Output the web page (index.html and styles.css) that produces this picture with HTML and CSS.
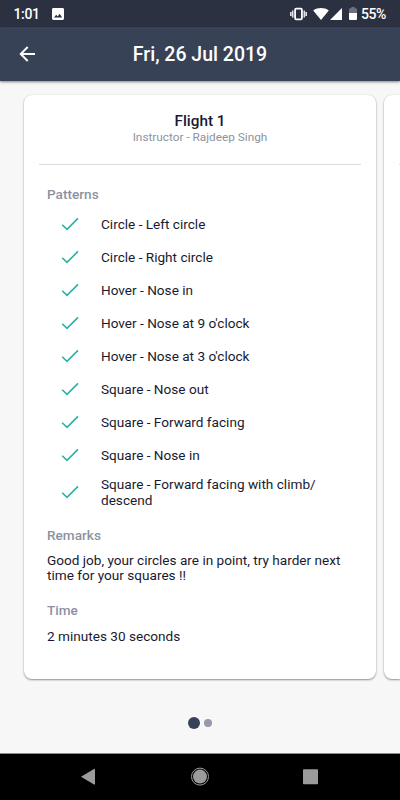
FILE: index.html
```html
<!DOCTYPE html>
<html lang="en">
<head>
<meta charset="utf-8">
<title>Fri, 26 Jul 2019</title>
<link rel="stylesheet" href="styles.css">
</head>
<body>
<svg class="defs" aria-hidden="true"><symbol id="check" viewBox="0 0 18 14"><path d="M1.2 7.7 6 12.4 17 1.4" fill="none" stroke="currentColor" stroke-width="1.6"/></symbol></svg>
<div class="status">
  <span class="clock">1:01</span>
  <svg class="photo" viewBox="0 0 12 12"><rect width="12" height="12" rx="1.4" fill="#fff"/><path d="M2 9.5 4.2 6.8 5.7 8.4 7.6 5.8 10.2 9.5z" fill="#2b3140"/></svg>
  <svg class="vibrate" viewBox="0 0 17 14"><path d="M.8 5v4M2.7 3.5v7M14.3 3.5v7M16.2 5v4" stroke="#e0e1e4" stroke-width="1.6"/><rect x="5.1" y="1.7" width="6.8" height="10.6" rx="1" fill="none" stroke="#fff" stroke-width="1.8"/></svg>
  <svg class="wifi" viewBox="0 0 16 12"><path d="M8 12 .2 2.4C4.8-.8 11.2-.8 15.8 2.4z" fill="#fff"/></svg>
  <svg class="signal" viewBox="0 0 12 12"><path d="M12 0v12H0z" fill="#fff"/></svg>
  <svg class="battery" viewBox="0 0 8 13"><path d="M2.3 0h3.4v1.2H7q1 0 1 1V6H0V2.2q0-1 1-1h1.3z" fill="#6d717c"/><path d="M0 6h8v6q0 1-1 1H1q-1 0-1-1z" fill="#fff"/></svg>
  <span class="percent">55%</span>
</div>
<header class="appbar">
  <svg class="back" viewBox="0 0 16 16"><path d="M16 8H1.8M8.7 1 1.7 8l7 7" fill="none" stroke="#fff" stroke-width="1.9"/></svg>
  <h1>Fri, 26 Jul 2019</h1>
</header>
<main>
  <div class="pager">
    <article class="card">
      <div class="head">
        <h2>Flight 1</h2>
        <p class="sub">Instructor - Rajdeep Singh</p>
      </div>
      <div class="body">
        <h3>Patterns</h3>
        <ul>
          <li><svg><use href="#check"/></svg><span>Circle - Left circle</span></li>
          <li><svg><use href="#check"/></svg><span>Circle - Right circle</span></li>
          <li><svg><use href="#check"/></svg><span>Hover - Nose in</span></li>
          <li><svg><use href="#check"/></svg><span>Hover - Nose at 9 o'clock</span></li>
          <li><svg><use href="#check"/></svg><span>Hover - Nose at 3 o'clock</span></li>
          <li><svg><use href="#check"/></svg><span>Square - Nose out</span></li>
          <li><svg><use href="#check"/></svg><span>Square - Forward facing</span></li>
          <li><svg><use href="#check"/></svg><span>Square - Nose in</span></li>
          <li class="tall"><svg><use href="#check"/></svg><span>Square - Forward facing with climb/<br>descend</span></li>
        </ul>
        <h3 class="remarks">Remarks</h3>
        <p class="text">Good job, your circles are in point, try harder next<br>time for your squares !!</p>
        <h3 class="time">Time</h3>
        <p class="text duration">2 minutes 30 seconds</p>
      </div>
    </article>
    <article class="card next"><div class="head"></div></article>
  </div>
  <div class="dots"><i class="active"></i><i></i></div>
</main>
<nav>
  <svg viewBox="0 0 400 46"><path d="M81 22.7 94 15q1-.5 1 .5v14.4q0 1-1 .5z" fill="#9b9b9b"/><circle cx="200" cy="22.6" r="8.5" fill="none" stroke="#9b9b9b" stroke-width="1"/><circle cx="200" cy="22.6" r="7" fill="#9b9b9b"/><rect x="303" y="15.2" width="15" height="15" rx=".8" fill="#9b9b9b"/></svg>
</nav>
</body>
</html>
```
FILE: styles.css
```css
* { box-sizing: border-box; margin: 0; padding: 0; }
body {
  width: 400px; height: 800px; overflow: hidden;
  display: flex; flex-direction: column;
  font-family: Roboto, sans-serif; background: #f7f7f7; color: #191a30;
}
svg { display: block; flex: none; }
.defs { position: absolute; width: 0; height: 0; }
.status {
  height: 27px; flex: none; display: flex; align-items: center;
  padding: 0 14px 0 13.5px; background: #2b3140; color: #fff;
}
.clock, .percent { font-size: 14px; font-weight: 500; line-height: 16px; padding-top: 1px; }
.clock { width: 38.5px; letter-spacing: -0.35px; }
.photo { width: 12px; height: 12px; }
.vibrate { width: 17px; height: 14px; margin-left: auto; }
.wifi { width: 16px; height: 12px; margin-left: 6px; }
.signal { width: 12px; height: 12px; margin-left: 1px; }
.battery { width: 8px; height: 13px; margin: 0 4px 0 7px; }
.percent { width: 25px; letter-spacing: -0.5px; white-space: nowrap; }
.appbar {
  height: 54px; flex: none; display: flex; align-items: center; position: relative; z-index: 1;
  padding-left: 19px; background: #384256; color: #fff;
  box-shadow: 0 1px 2px rgba(0,0,0,.4), 0 2px 4px rgba(0,0,0,.08);
}
.back { width: 16px; height: 16px; }
h1 { flex: 1; padding: 2px 35px 0 0; text-align: center; font-size: 19.5px; line-height: 24px; font-weight: 500; }
main { height: 673px; flex: none; padding-top: 14px; overflow: hidden; border-bottom: 1px solid #8c8c8c; }
.pager { display: flex; gap: 8px; padding-left: 24px; height: 584px; }
.card {
  width: 352px; flex: none; padding: 0 15px; border-radius: 8px; background: #fff;
  box-shadow: 0 1px 2px rgba(0,0,0,.42), 0 0 1px rgba(0,0,0,.12);
}
.next { width: 16px; padding-right: 0; border-radius: 8px 0 0 8px; }
.head { height: 70px; padding-top: 17px; border-bottom: 1px solid #dcdcdf; text-align: center; }
h2 { font-size: 15.3px; line-height: 18px; font-weight: 500; color: #171b33; }
.sub { font-size: 11.8px; line-height: 14px; color: #8d92a1; }
.body { padding: 21px 0 0 8px; }
h3 { font-size: 13.6px; line-height: 16px; font-weight: 500; color: #8d92a1; }
ul { list-style: none; padding-top: 5px; }
li { height: 33px; display: flex; align-items: center; padding-left: 14px; gap: 22px; font-size: 13.6px; line-height: 16px; }
li svg { width: 18px; height: 14px; color: #2bb1a5; }
.tall { height: 42px; }
.remarks { margin-top: 14px; }
.text { margin-top: 9.5px; font-size: 13.6px; line-height: 15.5px; }
.time { margin-top: 18.5px; }
.duration { margin-top: 10.5px; }
.dots { display: flex; align-items: center; justify-content: center; gap: 4px; padding-top: 38px; height: 50px; }
.dots i { width: 8px; height: 8px; border-radius: 50%; background: #9599a8; }
.dots .active { width: 12px; height: 12px; background: #384256; }
nav { height: 46px; flex: none; background: #000; }
nav svg { width: 400px; height: 46px; }
```
